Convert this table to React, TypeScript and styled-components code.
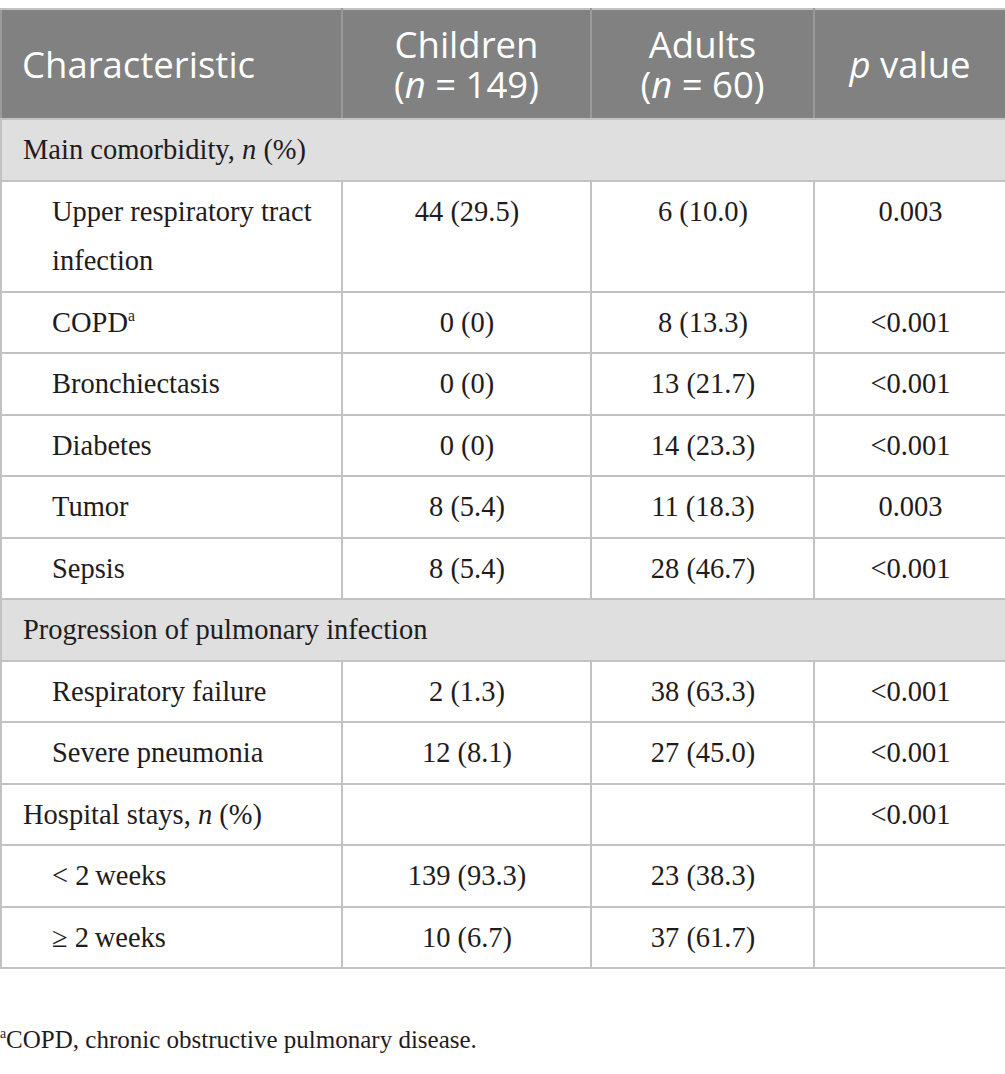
import React from "react";
import styled, { createGlobalStyle } from "styled-components";

const Global = createGlobalStyle`
  html, body { margin: 0; padding: 0; background: #ffffff; }
  body { padding-top: 8px; }
`;

const Page = styled.div`
  width: 1005px;
`;

const Table = styled.table`
  width: 1005px;
  border-collapse: collapse;
  table-layout: fixed;
  border: 2px solid #c2c2c2;
`;

const HeadCell = styled.th<{ $align?: string }>`
  background: #808180;
  color: #ffffff;
  font-family: "Open Sans", "Noto Sans", sans-serif;
  font-weight: 400;
  font-size: 36.5px;
  line-height: 40px;
  height: 80px;
  padding: 14px 20px;
  text-align: ${(p) => p.$align || "center"};
  vertical-align: middle;
  border: 2px solid #9a9a9a;
  border-top-color: #c2c2c2;
  border-bottom-color: #c2c2c2;
  white-space: nowrap;
`;

const HeadLine = styled.span`
  display: block;
  height: 40px;
`;

const SectionRow = styled.tr`
  background: #e0dfe0;
`;

const Cell = styled.td<{ $indent?: boolean; $align?: string }>`
  font-family: "Liberation Serif", "Times New Roman", serif;
  font-size: 28.5px;
  line-height: 49.5px;
  color: #1f1c1d;
  padding: 5px 20px 5px ${(p) => (p.$indent ? "50px" : "21px")};
  text-align: ${(p) => p.$align || "left"};
  vertical-align: top;
  border: 2px solid #c2c2c2;
  white-space: ${(p) => (p.$align === "center" ? "nowrap" : "normal")};
`;

const Sup = styled.sup`
  font-size: 0.55em;
  vertical-align: 0.7em;
  line-height: 0;
`;

const Note = styled.p`
  margin: 56px 0 0 0;
  font-family: "Liberation Serif", "Times New Roman", serif;
  font-size: 25px;
  line-height: 30px;
  color: #1f1c1d;
`;

type Row = { label: React.ReactNode; c: string; a: string; p: string };

const main: Row[] = [
  { label: <>Upper respiratory tract<br />infection</>, c: "44 (29.5)", a: "6 (10.0)", p: "0.003" },
  { label: <>COPD<Sup>a</Sup></>, c: "0 (0)", a: "8 (13.3)", p: "<0.001" },
  { label: "Bronchiectasis", c: "0 (0)", a: "13 (21.7)", p: "<0.001" },
  { label: "Diabetes", c: "0 (0)", a: "14 (23.3)", p: "<0.001" },
  { label: "Tumor", c: "8 (5.4)", a: "11 (18.3)", p: "0.003" },
  { label: "Sepsis", c: "8 (5.4)", a: "28 (46.7)", p: "<0.001" },
];

const prog: Row[] = [
  { label: "Respiratory failure", c: "2 (1.3)", a: "38 (63.3)", p: "<0.001" },
  { label: "Severe pneumonia", c: "12 (8.1)", a: "27 (45.0)", p: "<0.001" },
];

const stays: Row[] = [
  { label: "< 2\u2009weeks", c: "139 (93.3)", a: "23 (38.3)", p: "" },
  { label: "\u2265 2\u2009weeks", c: "10 (6.7)", a: "37 (61.7)", p: "" },
];

const DataRow = ({ r }: { r: Row }) => (
  <tr>
    <Cell $indent>{r.label}</Cell>
    <Cell $align="center">{r.c}</Cell>
    <Cell $align="center">{r.a}</Cell>
    <Cell $align="center">{r.p}</Cell>
  </tr>
);

export default function App() {
  return (
    <Page>
      <Global />
      <Table>
        <colgroup>
          <col style={{ width: 341 }} />
          <col style={{ width: 249 }} />
          <col style={{ width: 223 }} />
          <col style={{ width: 192 }} />
        </colgroup>
        <thead>
          <tr>
            <HeadCell $align="left">Characteristic</HeadCell>
            <HeadCell>
              <HeadLine>Children</HeadLine>
              <HeadLine>
                (<i>n</i> = 149)
              </HeadLine>
            </HeadCell>
            <HeadCell>
              <HeadLine>Adults</HeadLine>
              <HeadLine>
                (<i>n</i> = 60)
              </HeadLine>
            </HeadCell>
            <HeadCell>
              <i>p</i> value
            </HeadCell>
          </tr>
        </thead>
        <tbody>
          <SectionRow>
            <Cell colSpan={4}>
              Main comorbidity, <i>n</i> (%)
            </Cell>
          </SectionRow>
          {main.map((r, i) => (
            <DataRow key={"m" + i} r={r} />
          ))}
          <SectionRow>
            <Cell colSpan={4}>Progression of pulmonary infection</Cell>
          </SectionRow>
          {prog.map((r, i) => (
            <DataRow key={"p" + i} r={r} />
          ))}
          <tr>
            <Cell>
              Hospital stays, <i>n</i> (%)
            </Cell>
            <Cell />
            <Cell />
            <Cell $align="center">&lt;0.001</Cell>
          </tr>
          {stays.map((r, i) => (
            <DataRow key={"s" + i} r={r} />
          ))}
        </tbody>
      </Table>
      <Note>
        <Sup>a</Sup>COPD, chronic obstructive pulmonary disease.
      </Note>
    </Page>
  );
}
